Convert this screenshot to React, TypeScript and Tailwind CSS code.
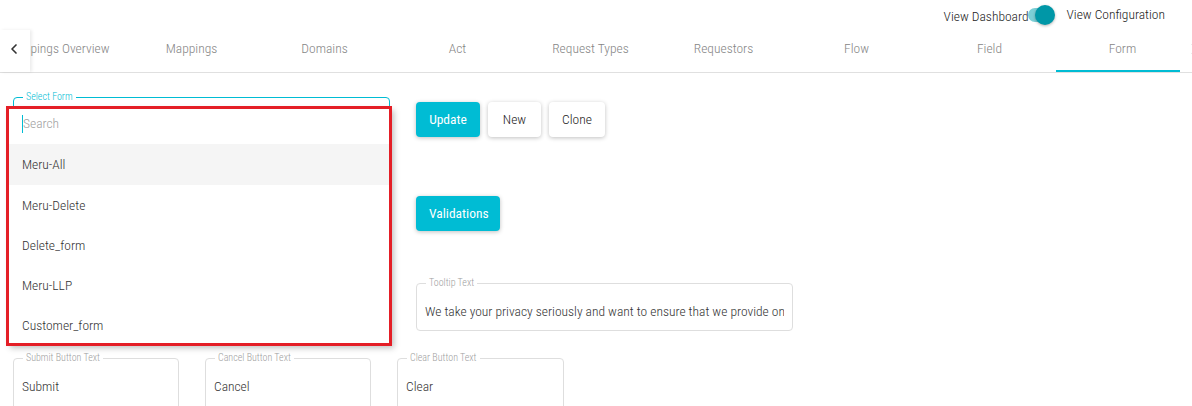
import { ChevronLeft, ChevronRight } from "lucide-react";

const tabs = [
  "Mappings Overview",
  "Mappings",
  "Domains",
  "Act",
  "Request Types",
  "Requestors",
  "Flow",
  "Field",
  "Form",
  "Settings",
];

const options = ["Meru-Delete", "Delete_form", "Meru-LLP", "Customer_form"];

function Field({
  label,
  value,
  className,
  active,
}: {
  label: string;
  value?: string;
  className?: string;
  active?: boolean;
}) {
  return (
    <fieldset
      className={`min-w-0 rounded-[4px] border ${
        active ? "border-[#00bcd4]" : "border-[#dedede]"
      } px-[8px] ${className ?? ""}`}
    >
      <legend
        className={`ml-[1px] px-[3px] text-[10px] leading-[12px] ${
          active ? "text-[#00bcd4]" : "text-[#a0a0a0]"
        }`}
      >
        {label}
      </legend>
      {value && (
        <div className="overflow-hidden whitespace-nowrap pt-[13px] text-[13.5px] leading-[18px] text-[#333]">
          {value}
        </div>
      )}
    </fieldset>
  );
}

function Btn({
  label,
  primary,
  className,
}: {
  label: string;
  primary?: boolean;
  className?: string;
}) {
  return (
    <button
      className={`h-[35px] rounded-[4px] px-[13px] text-[13.5px] shadow-[0_1px_4px_rgba(0,0,0,0.25)] ${
        primary ? "bg-[#00bcd4] font-normal text-white" : "bg-white text-[#222]"
      } ${className ?? ""}`}
    >
      {label}
    </button>
  );
}

export default function App() {
  return (
    <div className="relative h-[406px] w-[1192px] overflow-hidden bg-white font-['Roboto',sans-serif] font-light [font-stretch:condensed]">
      {/* top switch */}
      <div className="flex h-[30px] items-center justify-end pr-[27px] text-[13.5px] text-[#222]">
        <span className="mt-[3px]">View Dashboard</span>
        <div className="relative mr-[2px] h-[14px] w-[22px]">
          <div className="absolute left-0 top-0 h-[14px] w-[22px] rounded-full bg-[#7ccfd6]" />
          <div className="absolute left-[7px] top-[-3px] h-[20px] w-[20px] rounded-full bg-[#0097a7] shadow-[0_1px_3px_rgba(0,0,0,0.3)]" />
        </div>
        <span className="mb-[2px] ml-[14px]">View Configuration</span>
      </div>

      {/* tabs */}
      <div className="flex h-[43px] border-b border-[#e0e0e0]">
        <div className="z-10 flex w-[30px] shrink-0 items-center justify-center bg-white pb-[5px] shadow-[2px_0_3px_rgba(0,0,0,0.08)]">
          <ChevronLeft size={16} strokeWidth={2.5} className="ml-[-2px] text-[#333]" />
        </div>
        <div className="flex min-w-0 flex-1 overflow-hidden">
          <div className="ml-[-38px] flex shrink-0">
            {tabs.map((t) => (
              <div
                key={t}
                className={`flex h-[42px] w-[133px] shrink-0 items-center justify-center whitespace-nowrap pb-[6px] text-[13.5px] text-[#858585] ${
                  t === "Form" ? "border-b-[2px] border-[#00bcd4] pt-[2px]" : ""
                }`}
              >
                {t}
              </div>
            ))}
          </div>
        </div>
        <div className="flex w-[12px] shrink-0 items-center overflow-hidden pb-[5px]">
          <ChevronRight size={16} strokeWidth={1.5} className="ml-[6px] shrink-0 text-[#bbb]" />
        </div>
      </div>

      {/* content */}
      <div className="px-[13px] pt-[18px]">
        <div className="flex gap-[26px]">
          <div className="flex w-[377px] flex-col gap-[46px]">
            <Field label="Select Form" active className="h-[58px]" />
            <Field label="Form Name" className="h-[52px]" />
            <Field label="Title" className="h-[52px]" />
          </div>
          <div className="flex min-w-0 flex-col">
            <div className="mt-[11px] flex gap-[8px]">
              <Btn label="Update" primary className="w-[64px]" />
              <Btn label="New" className="w-[53px]" />
              <Btn label="Clone" className="w-[56px]" />
            </div>
            <div className="mt-[59px]">
              <Btn label="Validations" primary className="w-[84px]" />
            </div>
            <Field
              label="Tooltip Text"
              value="We take your privacy seriously and want to ensure that we provide only the most relevant information"
              className="mt-[46px] h-[54px] w-[377px]"
            />
          </div>
        </div>
        <div className="mt-[7px] flex gap-[26px]">
          <Field label="Submit Button Text" value="Submit" className="h-[60px] w-[166px]" />
          <Field label="Cancel Button Text" value="Cancel" className="h-[60px] w-[166px]" />
          <Field label="Clear Button Text" value="Clear" className="h-[60px] w-[167px]" />
        </div>
      </div>

      {/* open dropdown menu */}
      <div className="absolute left-[8px] top-[107px] w-[384px] bg-white shadow-[2px_3px_6px_rgba(0,0,0,0.25)]">
        <div className="flex h-[37px] items-center px-[14px] pb-[4px] text-[13.5px]">
          <span className="h-[18px] w-[1px] bg-[#00bcd4]" />
          <span className="text-[#a0a0a0]">Search</span>
        </div>
        <div className="flex h-[41px] items-center bg-[#f5f5f5] px-[14px] text-[13.5px] text-[#333]">
          Meru-All
        </div>
        {options.map((o) => (
          <div key={o} className="flex h-[40px] items-center px-[14px] text-[13.5px] text-[#333]">
            {o}
          </div>
        ))}
      </div>
      {/* highlight box */}
      <div className="pointer-events-none absolute left-[6px] top-[106px] h-[240px] w-[386px] border-[3px] border-[#e41e26]" />
    </div>
  );
}
